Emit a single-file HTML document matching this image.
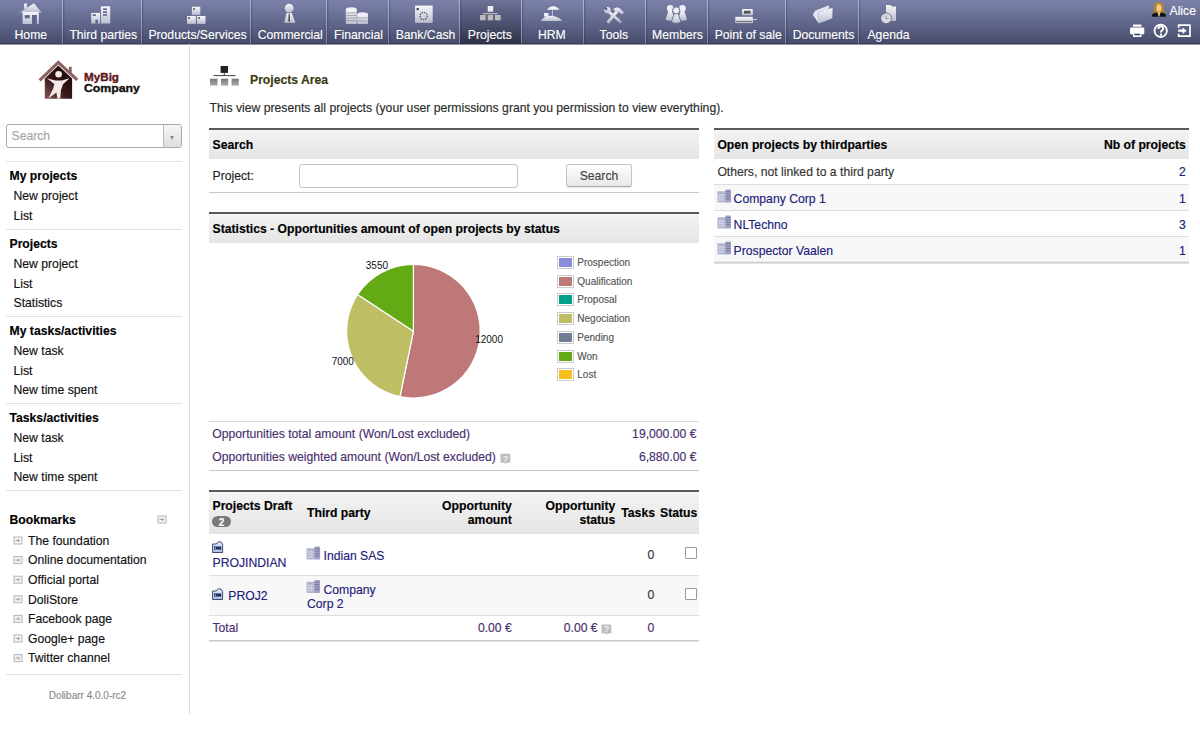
<!DOCTYPE html><html><head><meta charset="utf-8"><style>*{margin:0;padding:0;box-sizing:border-box}
html,body{width:1200px;height:750px;overflow:hidden;background:#fff}
body{font-family:"Liberation Sans",sans-serif;font-size:12px;color:#222;position:relative}
.a{position:absolute;white-space:nowrap;line-height:14px;-webkit-text-stroke:0.15px currentColor}
#nav{position:absolute;left:0;top:0;width:1200px;height:44px;background:linear-gradient(to bottom,#7b81a8 0%,#656b90 45%,#464b6a 100%)}
#navbot{position:absolute;left:0;top:43px;width:1200px;height:1px;background:rgba(40,42,62,.35)}
#navbot2{position:absolute;left:0;top:44px;width:1200px;height:1px;background:rgba(60,64,90,.55)}
.vl{position:absolute;left:6px;width:176px;height:1px;background:#e2e2e2}
.lnk{color:#22227a}
.hdr{position:absolute;background:linear-gradient(to bottom,#f3f3f3,#e5e5e5)}
.top2{position:absolute;height:2px;background:#595959}
svg{position:absolute;overflow:visible}
</style></head><body>
<svg style="left:0;top:0" width="0" height="0"><defs><linearGradient id="lg" x1="0" y1="0" x2="0" y2="1"><stop offset="0" stop-color="#f6f6fa"/><stop offset="1" stop-color="#b9bdcf"/></linearGradient></defs></svg>
<div id="nav"></div>
<div style="position:absolute;left:460px;top:0;width:61px;height:44px;background:linear-gradient(to bottom,#6d7297 0%,#4e5373 50%,#2e3146 100%)"></div>
<div style="position:absolute;left:62px;top:0;width:1px;height:44px;background:linear-gradient(to bottom,rgba(205,212,240,.6),rgba(190,196,225,.45))"></div>
<div style="position:absolute;left:63px;top:0;width:1px;height:44px;background:rgba(40,45,75,.28)"></div>
<div style="position:absolute;left:64px;top:0;width:1px;height:44px;background:rgba(40,45,75,.1)"></div>
<div style="position:absolute;left:140.5px;top:0;width:1px;height:44px;background:linear-gradient(to bottom,rgba(205,212,240,.6),rgba(190,196,225,.45))"></div>
<div style="position:absolute;left:141.5px;top:0;width:1px;height:44px;background:rgba(40,45,75,.28)"></div>
<div style="position:absolute;left:142.5px;top:0;width:1px;height:44px;background:rgba(40,45,75,.1)"></div>
<div style="position:absolute;left:250px;top:0;width:1px;height:44px;background:linear-gradient(to bottom,rgba(205,212,240,.6),rgba(190,196,225,.45))"></div>
<div style="position:absolute;left:251px;top:0;width:1px;height:44px;background:rgba(40,45,75,.28)"></div>
<div style="position:absolute;left:252px;top:0;width:1px;height:44px;background:rgba(40,45,75,.1)"></div>
<div style="position:absolute;left:326px;top:0;width:1px;height:44px;background:linear-gradient(to bottom,rgba(205,212,240,.6),rgba(190,196,225,.45))"></div>
<div style="position:absolute;left:327px;top:0;width:1px;height:44px;background:rgba(40,45,75,.28)"></div>
<div style="position:absolute;left:328px;top:0;width:1px;height:44px;background:rgba(40,45,75,.1)"></div>
<div style="position:absolute;left:388px;top:0;width:1px;height:44px;background:linear-gradient(to bottom,rgba(205,212,240,.6),rgba(190,196,225,.45))"></div>
<div style="position:absolute;left:389px;top:0;width:1px;height:44px;background:rgba(40,45,75,.28)"></div>
<div style="position:absolute;left:390px;top:0;width:1px;height:44px;background:rgba(40,45,75,.1)"></div>
<div style="position:absolute;left:459px;top:0;width:1px;height:44px;background:linear-gradient(to bottom,rgba(205,212,240,.6),rgba(190,196,225,.45))"></div>
<div style="position:absolute;left:460px;top:0;width:1px;height:44px;background:rgba(40,45,75,.28)"></div>
<div style="position:absolute;left:461px;top:0;width:1px;height:44px;background:rgba(40,45,75,.1)"></div>
<div style="position:absolute;left:521px;top:0;width:1px;height:44px;background:linear-gradient(to bottom,rgba(205,212,240,.6),rgba(190,196,225,.45))"></div>
<div style="position:absolute;left:522px;top:0;width:1px;height:44px;background:rgba(40,45,75,.28)"></div>
<div style="position:absolute;left:523px;top:0;width:1px;height:44px;background:rgba(40,45,75,.1)"></div>
<div style="position:absolute;left:583px;top:0;width:1px;height:44px;background:linear-gradient(to bottom,rgba(205,212,240,.6),rgba(190,196,225,.45))"></div>
<div style="position:absolute;left:584px;top:0;width:1px;height:44px;background:rgba(40,45,75,.28)"></div>
<div style="position:absolute;left:585px;top:0;width:1px;height:44px;background:rgba(40,45,75,.1)"></div>
<div style="position:absolute;left:645px;top:0;width:1px;height:44px;background:linear-gradient(to bottom,rgba(205,212,240,.6),rgba(190,196,225,.45))"></div>
<div style="position:absolute;left:646px;top:0;width:1px;height:44px;background:rgba(40,45,75,.28)"></div>
<div style="position:absolute;left:647px;top:0;width:1px;height:44px;background:rgba(40,45,75,.1)"></div>
<div style="position:absolute;left:707px;top:0;width:1px;height:44px;background:linear-gradient(to bottom,rgba(205,212,240,.6),rgba(190,196,225,.45))"></div>
<div style="position:absolute;left:708px;top:0;width:1px;height:44px;background:rgba(40,45,75,.28)"></div>
<div style="position:absolute;left:709px;top:0;width:1px;height:44px;background:rgba(40,45,75,.1)"></div>
<div style="position:absolute;left:785px;top:0;width:1px;height:44px;background:linear-gradient(to bottom,rgba(205,212,240,.6),rgba(190,196,225,.45))"></div>
<div style="position:absolute;left:786px;top:0;width:1px;height:44px;background:rgba(40,45,75,.28)"></div>
<div style="position:absolute;left:787px;top:0;width:1px;height:44px;background:rgba(40,45,75,.1)"></div>
<div style="position:absolute;left:858px;top:0;width:1px;height:44px;background:linear-gradient(to bottom,rgba(205,212,240,.6),rgba(190,196,225,.45))"></div>
<div style="position:absolute;left:859px;top:0;width:1px;height:44px;background:rgba(40,45,75,.28)"></div>
<div style="position:absolute;left:860px;top:0;width:1px;height:44px;background:rgba(40,45,75,.1)"></div>
<div class="a " style="top:27.78px;font-size:12.19px;line-height:14px;left:-10.2px;width:82px;text-align:center;color:#fff;text-shadow:0 0 1px rgba(20,20,40,.25);">Home</div>
<svg style="left:0;top:0" width="1" height="1"><path d="M19.5 12.6 L33.9 3.3 L41.6 12.6 Z" fill="url(#lg)"/><rect x="24" y="3.6" width="3" height="6" fill="url(#lg)"/><rect x="22.6" y="12" width="16.2" height="12" fill="url(#lg)"/><rect x="24.7" y="15.1" width="5" height="3.2" fill="#5f6689"/><rect x="32" y="15" width="4.9" height="9" fill="#5f6689"/></svg>
<div class="a " style="top:27.78px;font-size:12.19px;line-height:14px;left:53.75px;width:99px;text-align:center;color:#fff;text-shadow:0 0 1px rgba(20,20,40,.25);">Third parties</div>
<svg style="left:0;top:0" width="1" height="1"><rect x="91.2" y="12.9" width="8.8" height="10.6" fill="url(#lg)"/><rect x="100.9" y="6.3" width="9.3" height="17.2" fill="url(#lg)"/><rect x="92.6" y="14.3" width="3.4" height="1.6" fill="#5f6689"/><rect x="95.4" y="19.8" width="2.6" height="3.7" fill="#5f6689"/><rect x="103" y="8.4" width="4" height="1.6" fill="#5f6689"/><rect x="103" y="11.3" width="4" height="1.6" fill="#5f6689"/><rect x="103" y="14.2" width="4" height="1.6" fill="#5f6689"/></svg>
<div class="a " style="top:27.78px;font-size:12.19px;line-height:14px;left:132.5px;width:130px;text-align:center;color:#fff;text-shadow:0 0 1px rgba(20,20,40,.25);">Products/Services</div>
<svg style="left:0;top:0" width="1" height="1"><rect x="191.9" y="6.7" width="8.4" height="8.2" fill="url(#lg)"/><rect x="187" y="16" width="8.8" height="7.9" fill="url(#lg)"/><rect x="196.9" y="16" width="8.6" height="7.9" fill="url(#lg)"/><circle cx="194" cy="9" r="1" fill="#555"/><circle cx="189" cy="18" r="1" fill="#555"/><circle cx="199" cy="18" r="1" fill="#555"/></svg>
<div class="a " style="top:27.78px;font-size:12.19px;line-height:14px;left:242.25px;width:96px;text-align:center;color:#fff;text-shadow:0 0 1px rgba(20,20,40,.25);">Commercial</div>
<svg style="left:0;top:0" width="1" height="1"><circle cx="289.2" cy="8.2" r="4.4" fill="url(#lg)"/><path d="M286.6 13 L291.8 13 L295.4 22.8 L284.2 22.8 Z" fill="url(#lg)"/><path d="M288.7 13.5 L289.7 13.5 L290.1 21.5 L288.3 21.5 Z" fill="#444"/></svg>
<div class="a " style="top:27.78px;font-size:12.19px;line-height:14px;left:317.5px;width:82px;text-align:center;color:#fff;text-shadow:0 0 1px rgba(20,20,40,.25);">Financial</div>
<svg style="left:0;top:0" width="1" height="1"><rect x="345.8" y="9" width="11" height="14.9" rx="1" fill="url(#lg)"/><ellipse cx="351.3" cy="9.2" rx="5.5" ry="2" fill="#f4f4f8"/><rect x="357.2" y="14" width="10.8" height="9.9" rx="1" fill="url(#lg)"/><ellipse cx="362.6" cy="14.3" rx="5.4" ry="2" fill="#eef"/><path d="M346 13 H356.6 M346 15.5 H356.6 M346 18 H356.6 M346 20.5 H356.6 M357.4 18 H367.8 M357.4 21 H367.8" stroke="#888" stroke-width=".6"/></svg>
<div class="a " style="top:27.78px;font-size:12.19px;line-height:14px;left:380.0px;width:91px;text-align:center;color:#fff;text-shadow:0 0 1px rgba(20,20,40,.25);">Bank/Cash</div>
<svg style="left:0;top:0" width="1" height="1"><rect x="415" y="5.6" width="17.7" height="17.2" fill="url(#lg)"/><rect x="416.6" y="8" width="2.2" height="2.2" fill="#444"/><circle cx="423.6" cy="16" r="3.6" fill="none" stroke="#555" stroke-width="1.3" stroke-dasharray="1.4 1"/></svg>
<div class="a " style="top:27.78px;font-size:12.19px;line-height:14px;left:448.8px;width:82px;text-align:center;color:#fff;text-shadow:0 0 1px rgba(20,20,40,.25);">Projects</div>
<svg style="left:0;top:0" width="1" height="1"><rect x="487.7" y="6" width="5.5" height="5.7" fill="#eee"/><rect x="483" y="13.2" width="14.7" height="1" fill="#ccc"/><rect x="480" y="15" width="5.7" height="5.3" fill="#bbb"/><rect x="487.7" y="15" width="5.5" height="5.3" fill="#bbb"/><rect x="495" y="15" width="5.7" height="5.3" fill="#bbb"/></svg>
<div class="a " style="top:27.78px;font-size:12.19px;line-height:14px;left:510.79999999999995px;width:82px;text-align:center;color:#fff;text-shadow:0 0 1px rgba(20,20,40,.25);">HRM</div>
<svg style="left:0;top:0" width="1" height="1"><path d="M546.7 9.7 Q553.2 2.5 559.8 9.7 Z" fill="#f4f4f8"/><rect x="552" y="9.5" width=".8" height="6.5" fill="#ccd"/><rect x="544" y="13" width="4.4" height="3.5" fill="#eef"/><path d="M540.6 20.9 Q545 15 551 15.7 Q558 16 562.4 20.9 Z" fill="url(#lg)"/></svg>
<div class="a " style="top:27.78px;font-size:12.19px;line-height:14px;left:572.8px;width:82px;text-align:center;color:#fff;text-shadow:0 0 1px rgba(20,20,40,.25);">Tools</div>
<svg style="left:0;top:0" width="1" height="1"><path d="M609 12 L620 21.6" stroke="url(#lg)" stroke-width="2.7" stroke-linecap="round"/><circle cx="607.4" cy="10.2" r="3.1" fill="url(#lg)"/><path d="M603.6 8.2 L606.2 10.6 L607.8 9 L605.6 6.4 Z" fill="#5f6689"/><path d="M617.3 11 L608.4 21.8" stroke="url(#lg)" stroke-width="3" stroke-linecap="round"/><path d="M613.2 9 L616.8 7.2 L620 8.4 L624 12.6 L621.8 14.3 L618.6 11.9 L616 11.8 Z" fill="url(#lg)"/><circle cx="619.6" cy="21" r=".6" fill="#5f6689"/></svg>
<div class="a " style="top:27.78px;font-size:12.19px;line-height:14px;left:636.5px;width:82px;text-align:center;color:#fff;text-shadow:0 0 1px rgba(20,20,40,.25);">Members</div>
<svg style="left:0;top:0" width="1" height="1"><path d="M668.58 10.776 C667.8240000000001 13.8 665.88 17.04 665.88 19.740000000000002 Q670.2 21.684000000000005 674.5200000000001 19.740000000000002 C674.5200000000001 17.04 672.576 13.8 671.82 10.776 Z" fill="url(#lg)" /><circle cx="670.2" cy="8.4" r="3.3" fill="#eeeef4" /><path d="M680.88 10.776 C680.124 13.8 678.18 17.04 678.18 19.740000000000002 Q682.5 21.684000000000005 686.82 19.740000000000002 C686.82 17.04 684.876 13.8 684.12 10.776 Z" fill="url(#lg)" /><circle cx="682.5" cy="8.4" r="3.3" fill="#eeeef4" /><path d="M674.475 12.93 C673.6700000000001 16.15 671.6 19.6 671.6 22.475 Q676.2 24.545 680.8000000000001 22.475 C680.8000000000001 19.6 678.73 16.15 677.9250000000001 12.93 Z" fill="url(#lg)" stroke="#5f6689" stroke-width=".9"/><circle cx="676.2" cy="10.4" r="3.6" fill="#eeeef4" stroke="#5f6689" stroke-width=".9"/></svg>
<div class="a " style="top:27.78px;font-size:12.19px;line-height:14px;left:699.2px;width:98px;text-align:center;color:#fff;text-shadow:0 0 1px rgba(20,20,40,.25);">Point of sale</div>
<svg style="left:0;top:0" width="1" height="1"><rect x="742" y="9" width="10.9" height="6.3" rx="1" fill="url(#lg)"/><rect x="744" y="10.8" width="6.5" height="2.8" fill="#555"/><rect x="735.3" y="16.8" width="17.6" height="6.3" fill="url(#lg)"/><rect x="736" y="21" width="16" height=".9" fill="#666"/><path d="M753 19.5 H757" stroke="#ccd" stroke-width="1"/></svg>
<div class="a " style="top:27.78px;font-size:12.19px;line-height:14px;left:777.5px;width:92px;text-align:center;color:#fff;text-shadow:0 0 1px rgba(20,20,40,.25);">Documents</div>
<svg style="left:0;top:0" width="1" height="1"><path d="M812.8 14.8 L815 10.8 L828.9 5.2 L829.2 8.6 L818.4 12.3 L818.8 23.5 Z" fill="#e2e4ee"/><path d="M818.4 12.3 L824 10.3 L825 9 L826.6 9.6 L832.6 8 L832.3 18.3 L818.8 23.5 Z" fill="url(#lg)"/></svg>
<div class="a " style="top:27.78px;font-size:12.19px;line-height:14px;left:847.5px;width:82px;text-align:center;color:#fff;text-shadow:0 0 1px rgba(20,20,40,.25);">Agenda</div>
<svg style="left:0;top:0" width="1" height="1"><path d="M886 4.9 H890.5 L892 6.5 H896 V20.9 H886 Z" fill="url(#lg)"/><circle cx="886.1" cy="18.3" r="5.4" fill="#d8d8e2" stroke="#505672" stroke-width=".7"/><path d="M886 15.6 V18.5 H888.5" stroke="#777" stroke-width=".7" fill="none"/></svg>
<div id="navbot"></div><div id="navbot2"></div>
<svg style="left:0;top:0" width="1" height="1"><path d="M1154 9 Q1153 2.3 1159 2.2 Q1164.5 2.3 1164 9 L1164.5 14 L1153.5 14 Z" fill="#b8862a"/><ellipse cx="1159" cy="8" rx="2.6" ry="3.8" fill="#f0c890"/><path d="M1151.7 16.7 Q1152 13 1156 12.5 L1159 14 L1162 12.5 Q1166 13 1166 16.7 Z" fill="#111"/><path d="M1158 12.5 L1160 12.5 L1159.5 16.5 L1158.5 16.5 Z" fill="#f4e0c0"/><rect x="1133" y="24.5" width="8.5" height="2.2" fill="#fff"/><rect x="1130" y="27.5" width="14.3" height="6.8" rx="1.2" fill="#fff"/><rect x="1133" y="32" width="8.5" height="5" fill="#fff"/><rect x="1134.3" y="33.6" width="6" height="1.8" fill="#4e5474"/><circle cx="1160.7" cy="30.8" r="6.2" fill="none" stroke="#fff" stroke-width="1.8"/><path d="M1158.4 29 Q1158.4 26.4 1160.8 26.4 Q1163.1 26.4 1163.1 28.6 Q1163.1 29.9 1161.8 30.6 Q1160.9 31.1 1160.9 32.4" fill="none" stroke="#fff" stroke-width="1.9"/><rect x="1159.9" y="33.6" width="2" height="2" fill="#fff"/><path d="M1178.6 27.8 V25.2 H1190 V36.2 H1178.6 V33.8" fill="none" stroke="#fff" stroke-width="1.7" stroke-linejoin="round"/><path d="M1178.2 29.6 H1182.6 V27.4 L1186.6 30.7 L1182.6 34 V31.8 H1178.2 Z" fill="#fff"/></svg>
<div class="a " style="top:4.38px;font-size:12.19px;line-height:14px;left:1169.5px;color:#fff;">Alice</div>
<div style="position:absolute;left:189px;top:44px;width:1px;height:670px;background:#dcdcdc"></div>
<svg style="left:0;top:0" width="1" height="1"><defs><linearGradient id="hb" x1="0" y1="0" x2="1" y2="1"><stop offset="0" stop-color="#2a1010"/><stop offset=".55" stop-color="#3a1818"/><stop offset="1" stop-color="#1e0a0a"/></linearGradient></defs><defs><linearGradient id="hbg" x1="0" y1="1" x2=".8" y2="0"><stop offset="0" stop-color="#8a5858"/><stop offset=".45" stop-color="#3a1818"/><stop offset="1" stop-color="#1a0606"/></linearGradient></defs><path d="M44.8 98.8 V78.6 L58.3 65.6 L72.1 78.6 V98.8 Z" fill="url(#hbg)"/><path d="M39.6 80.4 L58.3 62.4 L77.2 79.8" fill="none" stroke="#8a6262" stroke-width="3"/><rect x="68.9" y="66.8" width="2.8" height="6" fill="#876060"/><circle cx="58.6" cy="74.2" r="3.3" fill="#f3e9e9"/><path d="M46.8 78.3 L55.5 80.6 L61.8 80.6 L69.5 78.2 L63 84.2 L61 90 L60.2 98.6 L57.4 98.6 L56.4 92.5 L48.3 98.6 L53.2 88.5 L54.3 84 Z" fill="#f3e9e9"/><text x="84" y="81.2" font-family="Liberation Sans" font-weight="bold" font-size="11" fill="#5e1618" stroke="#5e1618" stroke-width=".35" textLength="35" lengthAdjust="spacingAndGlyphs">MyBig</text><text x="83.9" y="92.1" font-family="Liberation Sans" font-weight="bold" font-size="11" fill="#141010" stroke="#141010" stroke-width=".35" textLength="56" lengthAdjust="spacingAndGlyphs">Company</text></svg>
<div style="position:absolute;left:6px;top:124px;width:176px;height:24px;border:1px solid #a9a9a9;border-radius:3px;background:#fff"></div>
<div style="position:absolute;left:163px;top:125px;width:18px;height:22px;border-left:1px solid #b9b9b9;border-radius:0 2px 2px 0;background:linear-gradient(to bottom,#f6f6f6,#dedede)"></div>
<div style="position:absolute;left:169.5px;top:135.5px;width:0;height:0;border-left:2.5px solid transparent;border-right:2.5px solid transparent;border-top:4px solid #8a8a8a"></div>
<div class="a " style="top:129.38px;font-size:12.19px;line-height:14px;left:11.5px;color:#a6a6a6;">Search</div>
<div class="vl" style="top:161px"></div>
<div class="a " style="top:169.38px;font-size:12.19px;line-height:14px;left:9.5px;font-weight:bold;color:#000;">My projects</div>
<div class="a " style="top:189.38px;font-size:12.19px;line-height:14px;left:13.5px;color:#111;">New project</div>
<div class="a " style="top:209.13px;font-size:12.19px;line-height:14px;left:13.5px;color:#111;">List</div>
<div class="vl" style="top:229px"></div>
<div class="a " style="top:236.88px;font-size:12.19px;line-height:14px;left:9.5px;font-weight:bold;color:#000;">Projects</div>
<div class="a " style="top:256.88px;font-size:12.19px;line-height:14px;left:13.5px;color:#111;">New project</div>
<div class="a " style="top:276.63px;font-size:12.19px;line-height:14px;left:13.5px;color:#111;">List</div>
<div class="a " style="top:296.38px;font-size:12.19px;line-height:14px;left:13.5px;color:#111;">Statistics</div>
<div class="vl" style="top:316px"></div>
<div class="a " style="top:323.88px;font-size:12.19px;line-height:14px;left:9.5px;font-weight:bold;color:#000;">My tasks/activities</div>
<div class="a " style="top:343.88px;font-size:12.19px;line-height:14px;left:13.5px;color:#111;">New task</div>
<div class="a " style="top:363.63px;font-size:12.19px;line-height:14px;left:13.5px;color:#111;">List</div>
<div class="a " style="top:383.38px;font-size:12.19px;line-height:14px;left:13.5px;color:#111;">New time spent</div>
<div class="vl" style="top:403px"></div>
<div class="a " style="top:410.88px;font-size:12.19px;line-height:14px;left:9.5px;font-weight:bold;color:#000;">Tasks/activities</div>
<div class="a " style="top:430.88px;font-size:12.19px;line-height:14px;left:13.5px;color:#111;">New task</div>
<div class="a " style="top:450.63px;font-size:12.19px;line-height:14px;left:13.5px;color:#111;">List</div>
<div class="a " style="top:470.38px;font-size:12.19px;line-height:14px;left:13.5px;color:#111;">New time spent</div>
<div class="vl" style="top:490px"></div>
<div class="a " style="top:513.08px;font-size:12.19px;line-height:14px;left:9.5px;font-weight:bold;color:#000;">Bookmarks</div>
<svg style="left:0;top:0" width="1" height="1"><rect x="158.0" y="516.0" width="8" height="7" fill="#f4f4f4" stroke="#b5b5b5" stroke-width="1"/><path d="M159.5 519.5 H163.5 M162.0 518.0 L163.5 519.5 L162.0 521.0" stroke="#999" stroke-width=".9" fill="none"/></svg>
<svg style="left:0;top:0" width="1" height="1"><rect x="14.0" y="537.0" width="8" height="7" fill="#f4f4f4" stroke="#b5b5b5" stroke-width="1"/><path d="M15.5 540.5 H19.5 M18.0 539.0 L19.5 540.5 L18.0 542.0" stroke="#999" stroke-width=".9" fill="none"/></svg>
<div class="a " style="top:533.88px;font-size:12.19px;line-height:14px;left:28px;color:#111;">The foundation</div>
<svg style="left:0;top:0" width="1" height="1"><rect x="14.0" y="556.6" width="8" height="7" fill="#f4f4f4" stroke="#b5b5b5" stroke-width="1"/><path d="M15.5 560.1 H19.5 M18.0 558.6 L19.5 560.1 L18.0 561.6" stroke="#999" stroke-width=".9" fill="none"/></svg>
<div class="a " style="top:553.48px;font-size:12.19px;line-height:14px;left:28px;color:#111;">Online documentation</div>
<svg style="left:0;top:0" width="1" height="1"><rect x="14.0" y="576.2" width="8" height="7" fill="#f4f4f4" stroke="#b5b5b5" stroke-width="1"/><path d="M15.5 579.7 H19.5 M18.0 578.2 L19.5 579.7 L18.0 581.2" stroke="#999" stroke-width=".9" fill="none"/></svg>
<div class="a " style="top:573.08px;font-size:12.19px;line-height:14px;left:28px;color:#111;">Official portal</div>
<svg style="left:0;top:0" width="1" height="1"><rect x="14.0" y="595.8000000000001" width="8" height="7" fill="#f4f4f4" stroke="#b5b5b5" stroke-width="1"/><path d="M15.5 599.3000000000001 H19.5 M18.0 597.8000000000001 L19.5 599.3000000000001 L18.0 600.8000000000001" stroke="#999" stroke-width=".9" fill="none"/></svg>
<div class="a " style="top:592.68px;font-size:12.19px;line-height:14px;left:28px;color:#111;">DoliStore</div>
<svg style="left:0;top:0" width="1" height="1"><rect x="14.0" y="615.4000000000001" width="8" height="7" fill="#f4f4f4" stroke="#b5b5b5" stroke-width="1"/><path d="M15.5 618.9000000000001 H19.5 M18.0 617.4000000000001 L19.5 618.9000000000001 L18.0 620.4000000000001" stroke="#999" stroke-width=".9" fill="none"/></svg>
<div class="a " style="top:612.28px;font-size:12.19px;line-height:14px;left:28px;color:#111;">Facebook page</div>
<svg style="left:0;top:0" width="1" height="1"><rect x="14.0" y="635.0000000000001" width="8" height="7" fill="#f4f4f4" stroke="#b5b5b5" stroke-width="1"/><path d="M15.5 638.5000000000001 H19.5 M18.0 637.0000000000001 L19.5 638.5000000000001 L18.0 640.0000000000001" stroke="#999" stroke-width=".9" fill="none"/></svg>
<div class="a " style="top:631.88px;font-size:12.19px;line-height:14px;left:28px;color:#111;">Google+ page</div>
<svg style="left:0;top:0" width="1" height="1"><rect x="14.0" y="654.6000000000001" width="8" height="7" fill="#f4f4f4" stroke="#b5b5b5" stroke-width="1"/><path d="M15.5 658.1000000000001 H19.5 M18.0 656.6000000000001 L19.5 658.1000000000001 L18.0 659.6000000000001" stroke="#999" stroke-width=".9" fill="none"/></svg>
<div class="a " style="top:651.48px;font-size:12.19px;line-height:14px;left:28px;color:#111;">Twitter channel</div>
<div class="vl" style="top:674px"></div>
<div class="a " style="top:690.13px;font-size:10px;line-height:12px;left:12.5px;width:150px;text-align:center;color:#8a8a8a;">Dolibarr 4.0.0-rc2</div>
<svg style="left:0;top:0" width="1" height="1"><defs><linearGradient id="pg" x1="0" y1="0" x2="0" y2="1"><stop offset="0" stop-color="#777"/><stop offset="1" stop-color="#aaa"/></linearGradient></defs><rect x="220.6" y="66" width="7.4" height="6.9" fill="#222"/><rect x="213.5" y="75" width="22" height="1.1" fill="#555"/><rect x="223.8" y="72.5" width="1" height="3" fill="#444"/><rect x="210" y="78.7" width="7.5" height="6.9" fill="url(#pg)"/><rect x="221" y="78.7" width="7.2" height="6.9" fill="url(#pg)"/><rect x="231.6" y="78.7" width="7.2" height="6.9" fill="url(#pg)"/></svg>
<div class="a " style="top:72.68px;font-size:12.19px;line-height:14px;left:250px;font-weight:bold;color:#3a3a10;">Projects Area</div>
<div class="a " style="top:101.18px;font-size:12.19px;line-height:14px;left:209.5px;color:#2a2a2a;">This view presents all projects (your user permissions grant you permission to view everything).</div>
<div class="top2" style="left:209px;top:128px;width:490px"></div>
<div class="hdr" style="left:209px;top:130px;width:490px;height:29px"></div>
<div style="position:absolute;left:209px;top:130px;width:490px;height:1px;background:#f9f9f9"></div>
<div class="a " style="top:138.38px;font-size:12.19px;line-height:14px;left:212.5px;font-weight:bold;color:#000;">Search</div>
<div class="a " style="top:169.38px;font-size:12.19px;line-height:14px;left:212.5px;color:#222;">Project:</div>
<div style="position:absolute;left:299px;top:164px;width:219px;height:24px;border:1px solid #c4c4c4;border-radius:3px;background:#fff"></div>
<div style="position:absolute;left:565.5px;top:164px;width:66px;height:23px;border:1px solid #c2c2c2;border-bottom-color:#a8a8a8;border-radius:3px;background:linear-gradient(to bottom,#fdfdfd,#e8e8e8);box-shadow:0 1px 1px rgba(0,0,0,.1)"></div>
<div class="a " style="top:169.38px;font-size:12.19px;line-height:14px;left:566.0px;width:66px;text-align:center;color:#444;">Search</div>
<div style="position:absolute;left:209px;top:192px;width:490px;height:1px;background:#c8c8c8"></div>
<div class="top2" style="left:209px;top:212px;width:490px"></div>
<div class="hdr" style="left:209px;top:214px;width:490px;height:29px"></div>
<div style="position:absolute;left:209px;top:214px;width:490px;height:1px;background:#f9f9f9"></div>
<div class="a " style="top:222.38px;font-size:12.19px;line-height:14px;left:212.5px;font-weight:bold;color:#000;">Statistics - Opportunities amount of open projects by status</div>
<svg style="left:0;top:0" width="1" height="1"><path d="M413.4 331.2 L413.40 264.40 A66.8 66.8 0 1 1 400.00 396.64 Z" fill="rgb(190,120,120)" stroke="#fff" stroke-width="1.2" stroke-linejoin="round"/><path d="M413.4 331.2 L400.00 396.64 A66.8 66.8 0 0 1 357.58 294.50 Z" fill="rgb(190,190,100)" stroke="#fff" stroke-width="1.2" stroke-linejoin="round"/><path d="M413.4 331.2 L357.58 294.50 A66.8 66.8 0 0 1 413.40 264.40 Z" fill="rgb(100,170,20)" stroke="#fff" stroke-width="1.2" stroke-linejoin="round"/><text x="365.8" y="268.8" font-family="Liberation Sans" font-size="10" fill="#111">3550</text><text x="475.2" y="342.8" font-family="Liberation Sans" font-size="10" fill="#111">12000</text><text x="331.7" y="364.6" font-family="Liberation Sans" font-size="10" fill="#111">7000</text></svg>
<div style="position:absolute;left:557px;top:255.8px;width:17px;height:13px;border:1px solid #ccc;padding:1px;background:#fff"><div style="width:13px;height:9px;background:rgb(140,140,220)"></div></div>
<div class="a " style="top:256.94px;font-size:10px;line-height:12px;left:577.3px;color:#555;">Prospection</div>
<div style="position:absolute;left:557px;top:274.55px;width:17px;height:13px;border:1px solid #ccc;padding:1px;background:#fff"><div style="width:13px;height:9px;background:rgb(190,120,120)"></div></div>
<div class="a " style="top:275.69px;font-size:10px;line-height:12px;left:577.3px;color:#555;">Qualification</div>
<div style="position:absolute;left:557px;top:293.3px;width:17px;height:13px;border:1px solid #ccc;padding:1px;background:#fff"><div style="width:13px;height:9px;background:rgb(0,160,140)"></div></div>
<div class="a " style="top:294.44px;font-size:10px;line-height:12px;left:577.3px;color:#555;">Proposal</div>
<div style="position:absolute;left:557px;top:312.05px;width:17px;height:13px;border:1px solid #ccc;padding:1px;background:#fff"><div style="width:13px;height:9px;background:rgb(190,190,100)"></div></div>
<div class="a " style="top:313.19px;font-size:10px;line-height:12px;left:577.3px;color:#555;">Negociation</div>
<div style="position:absolute;left:557px;top:330.8px;width:17px;height:13px;border:1px solid #ccc;padding:1px;background:#fff"><div style="width:13px;height:9px;background:rgb(115,125,150)"></div></div>
<div class="a " style="top:331.94px;font-size:10px;line-height:12px;left:577.3px;color:#555;">Pending</div>
<div style="position:absolute;left:557px;top:349.55px;width:17px;height:13px;border:1px solid #ccc;padding:1px;background:#fff"><div style="width:13px;height:9px;background:rgb(100,170,20)"></div></div>
<div class="a " style="top:350.69px;font-size:10px;line-height:12px;left:577.3px;color:#555;">Won</div>
<div style="position:absolute;left:557px;top:368.3px;width:17px;height:13px;border:1px solid #ccc;padding:1px;background:#fff"><div style="width:13px;height:9px;background:rgb(250,190,30)"></div></div>
<div class="a " style="top:369.44px;font-size:10px;line-height:12px;left:577.3px;color:#555;">Lost</div>
<div style="position:absolute;left:209px;top:421px;width:490px;height:1px;background:#d8d8d8"></div>
<div class="a " style="top:426.68px;font-size:12.19px;line-height:14px;left:212.3px;color:#4a2f6e;">Opportunities total amount (Won/Lost excluded)</div>
<div class="a " style="top:426.68px;font-size:12.19px;line-height:14px;right:503.5px;color:#4a2f6e;">19,000.00 €</div>
<div class="a " style="top:450.08px;font-size:12.19px;line-height:14px;left:212.3px;color:#4a2f6e;">Opportunities weighted amount (Won/Lost excluded)</div>
<svg style="left:0;top:0" width="1" height="1"><path d="M501.5 453.8 H509.3 Q510.3 453.8 510.3 454.8 V461.8 Q510.3 462.8 509.3 462.8 H506.5 L505.4 464.0 L504.3 462.8 H501.5 Q500.5 462.8 500.5 461.8 V454.8 Q500.5 453.8 501.5 453.8 Z" fill="#bdbdbd"/><text x="505.4" y="461.6" text-anchor="middle" font-family="Liberation Sans" font-weight="bold" font-size="9" fill="#f4f4f4">?</text></svg>
<div class="a " style="top:450.08px;font-size:12.19px;line-height:14px;right:503.5px;color:#4a2f6e;">6,880.00 €</div>
<div style="position:absolute;left:209px;top:470px;width:490px;height:1px;background:#c8c8c8"></div>
<div class="top2" style="left:209px;top:490px;width:490px"></div>
<div class="hdr" style="left:209px;top:492px;width:490px;height:42px"></div>
<div style="position:absolute;left:209px;top:492px;width:490px;height:1px;background:#f9f9f9"></div>
<div class="a " style="top:499.38px;font-size:12.19px;line-height:14px;left:212.5px;font-weight:bold;color:#000;">Projects Draft</div>
<div style="position:absolute;left:212px;top:516px;width:19px;height:11px;border-radius:6px;background:#7a7a7a"></div>
<div class="a " style="top:516.63px;font-size:10px;line-height:12px;left:212.0px;width:19px;text-align:center;font-weight:bold;color:#fff;">2</div>
<div class="a " style="top:506.38px;font-size:12.19px;line-height:14px;left:307px;font-weight:bold;color:#000;">Third party</div>
<div class="a " style="top:499.38px;font-size:12.19px;line-height:14px;right:688.2px;font-weight:bold;color:#000;">Opportunity</div>
<div class="a " style="top:513.38px;font-size:12.19px;line-height:14px;right:688.2px;font-weight:bold;color:#000;">amount</div>
<div class="a " style="top:499.38px;font-size:12.19px;line-height:14px;right:584.7px;font-weight:bold;color:#000;">Opportunity</div>
<div class="a " style="top:513.38px;font-size:12.19px;line-height:14px;right:584.7px;font-weight:bold;color:#000;">status</div>
<div class="a " style="top:506.38px;font-size:12.19px;line-height:14px;left:621.3px;font-weight:bold;color:#000;">Tasks</div>
<div class="a " style="top:506.38px;font-size:12.19px;line-height:14px;left:660px;font-weight:bold;color:#000;">Status</div>
<svg style="left:0;top:0" width="1" height="1"><defs><linearGradient id="pjg" x1="0" y1="0" x2="0" y2="1"><stop offset="0" stop-color="#e2ecfa"/><stop offset="1" stop-color="#a9c1e4"/></linearGradient></defs><path d="M212.6 544 L216 544 L218.8 541.8 L221 542 L222.6 544.2 V552.5 H212.6 Z" fill="url(#pjg)" stroke="#3e4a70" stroke-width="1"/><path d="M214 546.4 H221.2 V549.2 Q220.6 550.2 219.8 549.4 H215.8 Q214.8 550.2 214 549.2 Z" fill="#1e2a58"/><circle cx="215.2" cy="548.3" r=".7" fill="#dfe8f8"/></svg>
<div class="a lnk" style="top:555.88px;font-size:12.19px;line-height:14px;left:212.5px;">PROJINDIAN</div>
<svg style="left:0;top:0" width="1" height="1"><rect x="306.5" y="548.3" width="9" height="11.3" rx="1" fill="#b3b5d0"/><rect x="314.3" y="546.5" width="5.8" height="13.1" rx="1" fill="#a2a4c4"/><path d="M315.1 548.7 H319.3 M315.1 551.1 H319.3 M315.1 553.5 H319.3 M315.1 555.9 H319.3" stroke="#6e7098" stroke-width=".9"/><path d="M309.0 551.0 V558.0 M311.5 551.0 V558.0 M307.5 552.3 H313.5 M307.5 554.8 H313.5 M307.5 557.3 H313.5" stroke="#eceef8" stroke-width=".8" stroke-dasharray="1.2 1.2"/></svg>
<div class="a lnk" style="top:549.38px;font-size:12.19px;line-height:14px;left:323.5px;">Indian SAS</div>
<div class="a " style="top:547.88px;font-size:12.19px;line-height:14px;right:545.7px;color:#333;">0</div>
<div style="position:absolute;left:685px;top:547px;width:12px;height:12px;border:1px solid #999;border-radius:1px;background:#fff"></div>
<div style="position:absolute;left:209px;top:575px;width:490px;height:1px;background:#dddddd"></div>
<div style="position:absolute;left:209px;top:576px;width:490px;height:39px;background:#f8f8f8"></div>
<svg style="left:0;top:0" width="1" height="1"><defs><linearGradient id="pjg" x1="0" y1="0" x2="0" y2="1"><stop offset="0" stop-color="#e2ecfa"/><stop offset="1" stop-color="#a9c1e4"/></linearGradient></defs><path d="M212.6 591 L216 591 L218.8 588.8 L221 589 L222.6 591.2 V599.5 H212.6 Z" fill="url(#pjg)" stroke="#3e4a70" stroke-width="1"/><path d="M214 593.4 H221.2 V596.2 Q220.6 597.2 219.8 596.4 H215.8 Q214.8 597.2 214 596.2 Z" fill="#1e2a58"/><circle cx="215.2" cy="595.3" r=".7" fill="#dfe8f8"/></svg>
<div class="a lnk" style="top:589.38px;font-size:12.19px;line-height:14px;left:228.3px;">PROJ2</div>
<svg style="left:0;top:0" width="1" height="1"><rect x="306.5" y="581.8" width="9" height="11.3" rx="1" fill="#b3b5d0"/><rect x="314.3" y="580" width="5.8" height="13.1" rx="1" fill="#a2a4c4"/><path d="M315.1 582.2 H319.3 M315.1 584.6 H319.3 M315.1 587 H319.3 M315.1 589.4 H319.3" stroke="#6e7098" stroke-width=".9"/><path d="M309.0 584.5 V591.5 M311.5 584.5 V591.5 M307.5 585.8 H313.5 M307.5 588.3 H313.5 M307.5 590.8 H313.5" stroke="#eceef8" stroke-width=".8" stroke-dasharray="1.2 1.2"/></svg>
<div class="a lnk" style="top:582.68px;font-size:12.19px;line-height:14px;left:323.5px;">Company</div>
<div class="a lnk" style="top:596.88px;font-size:12.19px;line-height:14px;left:307px;">Corp 2</div>
<div class="a " style="top:588.38px;font-size:12.19px;line-height:14px;right:545.7px;color:#333;">0</div>
<div style="position:absolute;left:685px;top:588px;width:12px;height:12px;border:1px solid #999;border-radius:1px;background:#fff"></div>
<div style="position:absolute;left:209px;top:615px;width:490px;height:1px;background:#dddddd"></div>
<div class="a " style="top:621.08px;font-size:12.19px;line-height:14px;left:212.5px;color:#4a2f6e;">Total</div>
<div class="a " style="top:621.08px;font-size:12.19px;line-height:14px;right:688.2px;color:#4a2f6e;">0.00 €</div>
<div class="a " style="top:621.08px;font-size:12.19px;line-height:14px;right:602.4px;color:#4a2f6e;">0.00 €</div>
<svg style="left:0;top:0" width="1" height="1"><path d="M602.5 624.5 H610.3 Q611.3 624.5 611.3 625.5 V632.5 Q611.3 633.5 610.3 633.5 H607.5 L606.4 634.7 L605.3 633.5 H602.5 Q601.5 633.5 601.5 632.5 V625.5 Q601.5 624.5 602.5 624.5 Z" fill="#bdbdbd"/><text x="606.4" y="632.3" text-anchor="middle" font-family="Liberation Sans" font-weight="bold" font-size="9" fill="#f4f4f4">?</text></svg>
<div class="a " style="top:621.08px;font-size:12.19px;line-height:14px;right:545.7px;color:#4a2f6e;">0</div>
<div style="position:absolute;left:209px;top:640px;width:490px;height:1px;background:#c8c8c8"></div>
<div style="position:absolute;left:209px;top:641px;width:490px;height:1px;background:#e4e4e4"></div>
<div class="top2" style="left:714px;top:128px;width:475px"></div>
<div class="hdr" style="left:714px;top:130px;width:475px;height:29px"></div>
<div style="position:absolute;left:714px;top:130px;width:475px;height:1px;background:#f9f9f9"></div>
<div class="a " style="top:138.38px;font-size:12.19px;line-height:14px;left:717.4px;font-weight:bold;color:#000;">Open projects by thirdparties</div>
<div class="a " style="top:138.38px;font-size:12.19px;line-height:14px;right:14.200000000000045px;font-weight:bold;color:#000;">Nb of projects</div>
<div class="a " style="top:165.18px;font-size:12.19px;line-height:14px;left:717.4px;color:#333;">Others, not linked to a third party</div>
<div class="a lnk" style="top:165.18px;font-size:12.19px;line-height:14px;right:14.200000000000045px;">2</div>
<div style="position:absolute;left:714px;top:184px;width:475px;height:1px;background:#dddddd"></div>
<div style="position:absolute;left:714px;top:185px;width:475px;height:25px;background:#f8f8f8"></div>
<svg style="left:0;top:0" width="1" height="1"><rect x="717.4" y="191.3" width="9" height="11.3" rx="1" fill="#b3b5d0"/><rect x="725.1999999999999" y="189.5" width="5.8" height="13.1" rx="1" fill="#a2a4c4"/><path d="M726.0 191.7 H730.1999999999999 M726.0 194.1 H730.1999999999999 M726.0 196.5 H730.1999999999999 M726.0 198.9 H730.1999999999999" stroke="#6e7098" stroke-width=".9"/><path d="M719.9 194.0 V201.0 M722.4 194.0 V201.0 M718.4 195.3 H724.4 M718.4 197.8 H724.4 M718.4 200.3 H724.4" stroke="#eceef8" stroke-width=".8" stroke-dasharray="1.2 1.2"/></svg>
<div class="a lnk" style="top:191.88px;font-size:12.19px;line-height:14px;left:733.6px;">Company Corp 1</div>
<div class="a lnk" style="top:191.88px;font-size:12.19px;line-height:14px;right:14.200000000000045px;">1</div>
<div style="position:absolute;left:714px;top:210px;width:475px;height:1px;background:#dddddd"></div>
<svg style="left:0;top:0" width="1" height="1"><rect x="717.4" y="217.3" width="9" height="11.3" rx="1" fill="#b3b5d0"/><rect x="725.1999999999999" y="215.5" width="5.8" height="13.1" rx="1" fill="#a2a4c4"/><path d="M726.0 217.7 H730.1999999999999 M726.0 220.1 H730.1999999999999 M726.0 222.5 H730.1999999999999 M726.0 224.9 H730.1999999999999" stroke="#6e7098" stroke-width=".9"/><path d="M719.9 220.0 V227.0 M722.4 220.0 V227.0 M718.4 221.3 H724.4 M718.4 223.8 H724.4 M718.4 226.3 H724.4" stroke="#eceef8" stroke-width=".8" stroke-dasharray="1.2 1.2"/></svg>
<div class="a lnk" style="top:217.98px;font-size:12.19px;line-height:14px;left:733.6px;">NLTechno</div>
<div class="a lnk" style="top:217.98px;font-size:12.19px;line-height:14px;right:14.200000000000045px;">3</div>
<div style="position:absolute;left:714px;top:236px;width:475px;height:1px;background:#dddddd"></div>
<div style="position:absolute;left:714px;top:237px;width:475px;height:24px;background:#f8f8f8"></div>
<svg style="left:0;top:0" width="1" height="1"><rect x="717.4" y="243.3" width="9" height="11.3" rx="1" fill="#b3b5d0"/><rect x="725.1999999999999" y="241.5" width="5.8" height="13.1" rx="1" fill="#a2a4c4"/><path d="M726.0 243.7 H730.1999999999999 M726.0 246.1 H730.1999999999999 M726.0 248.5 H730.1999999999999 M726.0 250.9 H730.1999999999999" stroke="#6e7098" stroke-width=".9"/><path d="M719.9 246.0 V253.0 M722.4 246.0 V253.0 M718.4 247.3 H724.4 M718.4 249.8 H724.4 M718.4 252.3 H724.4" stroke="#eceef8" stroke-width=".8" stroke-dasharray="1.2 1.2"/></svg>
<div class="a lnk" style="top:243.88px;font-size:12.19px;line-height:14px;left:733.6px;">Prospector Vaalen</div>
<div class="a lnk" style="top:243.88px;font-size:12.19px;line-height:14px;right:14.200000000000045px;">1</div>
<div style="position:absolute;left:714px;top:261px;width:475px;height:1px;background:#ececec"></div>
<div style="position:absolute;left:714px;top:262px;width:475px;height:1px;background:#cfcfcf"></div>
<div style="position:absolute;left:714px;top:263px;width:475px;height:1px;background:#e2e2e2"></div>
</body></html>
